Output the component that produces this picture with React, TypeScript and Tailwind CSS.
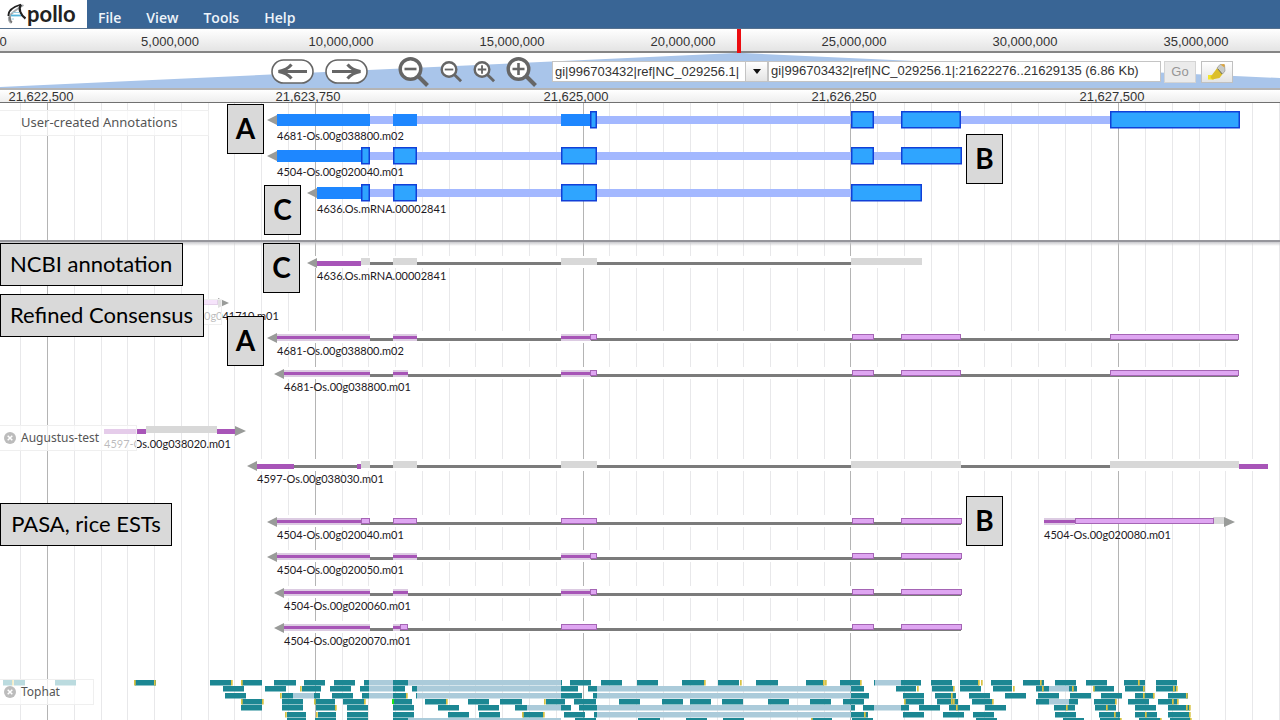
import React from "react";

type Kind = "utr" | "cds" | "gray" | "thick";
type Part = [number, number, Kind];

interface Transcript {
  name: string;
  y: number;
  start: number;
  end: number;
  dir: "left" | "right";
  parts: Part[];
  labelX: number;
  bare?: boolean;
}

const MINOR = 26.78;
const ORIGIN = 47.5;

const overviewTicks: [number, string][] = [
  [3, "0"],
  [170, "5,000,000"],
  [341, "10,000,000"],
  [512, "15,000,000"],
  [683, "20,000,000"],
  [854, "25,000,000"],
  [1025, "30,000,000"],
  [1196, "35,000,000"],
];

const detailTicks: [number, string][] = [
  [41, "21,622,500"],
  [308, "21,623,750"],
  [576, "21,625,000"],
  [844, "21,626,250"],
  [1112, "21,627,500"],
];

const userTranscripts: Transcript[] = [
  {
    name: "4681-Os.00g038800.m02", y: 17, start: 277, end: 1239, dir: "left", labelX: 277,
    parts: [[277, 370, "utr"], [393, 417, "utr"], [561, 591, "utr"], [590, 597, "cds"], [851, 874, "cds"], [901, 961, "cds"], [1110, 1240, "cds"]],
  },
  {
    name: "4504-Os.00g020040.m01", y: 53, start: 277, end: 962, dir: "left", labelX: 277,
    parts: [[277, 361, "utr"], [361, 370, "cds"], [393, 417, "cds"], [561, 597, "cds"], [851, 874, "cds"], [901, 962, "cds"]],
  },
  {
    name: "4636.Os.mRNA.00002841", y: 90, start: 317, end: 922, dir: "left", labelX: 317,
    parts: [[317, 361, "utr"], [361, 370, "cds"], [393, 417, "cds"], [561, 597, "cds"], [851, 922, "cds"]],
  },
];

const ncbi: Transcript[] = [
  {
    name: "4636.Os.mRNA.00002841", y: 20, start: 317, end: 922, dir: "left", labelX: 317,
    parts: [[317, 361, "thick"], [361, 370, "gray"], [393, 417, "gray"], [561, 597, "gray"], [851, 922, "gray"]],
  },
];

const refined: Transcript[] = [
  {
    name: "0g041710.m01", y: 2, start: 204, end: 218, dir: "right", labelX: 204, bare: true,
    parts: [[200, 218, "cds"]],
  },
  {
    name: "4681-Os.00g038800.m02", y: 37, start: 277, end: 1239, dir: "left", labelX: 277,
    parts: [[277, 370, "utr"], [393, 417, "utr"], [561, 591, "utr"], [590, 597, "cds"], [852, 874, "cds"], [901, 961, "cds"], [1110, 1239, "cds"]],
  },
  {
    name: "4681-Os.00g038800.m01", y: 73, start: 284, end: 1239, dir: "left", labelX: 284,
    parts: [[284, 370, "utr"], [393, 408, "utr"], [561, 591, "utr"], [590, 597, "cds"], [852, 874, "cds"], [901, 961, "cds"], [1110, 1239, "cds"]],
  },
];

const augustus: Transcript[] = [
  {
    name: "4597-Os.00g038020.m01", y: 5, start: 104, end: 235, dir: "right", labelX: 104, bare: true,
    parts: [[104, 146, "thick"], [146, 217, "gray"], [217, 235, "thick"]],
  },
  {
    name: "4597-Os.00g038030.m01", y: 40, start: 257, end: 1268, dir: "left", labelX: 257,
    parts: [[257, 294, "thick"], [357, 361, "thick"], [361, 370, "gray"], [393, 417, "gray"], [561, 597, "gray"], [851, 961, "gray"], [1110, 1239, "gray"], [1239, 1268, "thick"]],
  },
];

const pasa: Transcript[] = [
  {
    name: "4504-Os.00g020040.m01", y: 6, start: 277, end: 962, dir: "left", labelX: 277,
    parts: [[277, 361, "utr"], [361, 370, "cds"], [393, 417, "cds"], [561, 597, "cds"], [852, 874, "cds"], [901, 962, "cds"]],
  },
  {
    name: "4504-Os.00g020080.m01", y: 6, start: 1044, end: 1224, dir: "right", labelX: 1044, bare: true,
    parts: [[1044, 1075, "utr"], [1213, 1224, "gray"], [1075, 1214, "cds"]],
  },
  {
    name: "4504-Os.00g020050.m01", y: 41, start: 277, end: 962, dir: "left", labelX: 277,
    parts: [[277, 370, "utr"], [393, 417, "utr"], [561, 591, "utr"], [590, 597, "cds"], [852, 874, "cds"], [901, 962, "cds"]],
  },
  {
    name: "4504-Os.00g020060.m01", y: 77, start: 284, end: 962, dir: "left", labelX: 284,
    parts: [[284, 370, "utr"], [393, 408, "utr"], [561, 591, "utr"], [590, 597, "cds"], [852, 874, "cds"], [901, 962, "cds"]],
  },
  {
    name: "4504-Os.00g020070.m01", y: 112, start: 284, end: 962, dir: "left", labelX: 284,
    parts: [[284, 370, "utr"], [393, 400, "utr"], [400, 408, "cds"], [561, 597, "cds"], [852, 874, "cds"], [901, 962, "cds"]],
  },
];

interface ReadRow {
  y: number;
  reads: [number, number][];
  gaps: [number, number][];
  marks: number[];
}

const readRows: ReadRow[] = [
  {
    y: 1,
    reads: [[3, 12], [14, 25], [55, 76], [135, 156], [210, 231], [242, 262], [274, 296], [304, 325], [334, 355], [364, 369], [393, 408], [561, 562], [570, 591], [601, 622], [637, 658], [682, 704], [718, 739], [756, 778], [806, 824], [840, 860], [874, 875], [901, 921], [931, 952], [960, 979], [991, 1012], [1023, 1044], [1055, 1076], [1086, 1107], [1124, 1145], [1156, 1177]],
    gaps: [[369, 393], [408, 561], [875, 901]],
    marks: [12, 134, 154, 231, 241, 704, 740, 823, 825, 860, 978, 981, 1040, 1138],
  },
  {
    y: 7,
    reads: [[223, 244], [265, 286], [302, 321], [330, 351], [360, 369], [393, 405], [412, 417], [561, 578], [588, 597], [851, 864], [896, 916], [932, 953], [960, 981], [993, 1012], [1036, 1049], [1069, 1077], [1094, 1114], [1125, 1145], [1156, 1176]],
    gaps: [[369, 393], [417, 561], [597, 851], [1049, 1069]],
    marks: [300, 917, 953, 1013, 1042, 1072, 1093, 1143, 1173, 1176],
  },
  {
    y: 14,
    reads: [[225, 246], [282, 293], [314, 320], [332, 353], [362, 369], [393, 406], [416, 417], [561, 582], [593, 597], [851, 869], [903, 924], [935, 956], [969, 990], [1005, 1026], [1038, 1059], [1070, 1091], [1101, 1122], [1135, 1154], [1168, 1188]],
    gaps: [[293, 314], [369, 393], [417, 561], [597, 851]],
    marks: [280, 406, 951, 1143, 1153, 1186],
  },
  {
    y: 20,
    reads: [[242, 262], [282, 303], [315, 335], [343, 364], [393, 412], [425, 446], [468, 489], [500, 522], [546, 565], [574, 596], [619, 640], [662, 683], [690, 711], [722, 743], [768, 789], [810, 831], [843, 864], [905, 924], [937, 958], [972, 992], [1036, 1049], [1069, 1078], [1094, 1115], [1128, 1149], [1158, 1177]],
    gaps: [[1049, 1069]],
    marks: [241, 262, 314, 364, 446, 544, 904, 951, 953, 992, 1115, 1172, 1177],
  },
  {
    y: 26,
    reads: [[241, 262], [282, 303], [316, 336], [347, 368], [393, 414], [438, 459], [478, 499], [515, 527], [561, 571], [579, 597], [851, 855], [863, 874], [901, 909], [919, 940], [949, 970], [985, 1006], [1054, 1075], [1095, 1116], [1135, 1156], [1168, 1190]],
    gaps: [[527, 561], [597, 851], [874, 901]],
    marks: [335, 956, 1066, 1106, 1186, 1189],
  },
  {
    y: 33,
    reads: [[287, 306], [318, 336], [347, 368], [393, 414], [448, 469], [479, 500], [523, 543], [564, 585], [594, 597], [851, 868], [903, 924], [943, 964], [973, 994], [1055, 1076], [1099, 1120], [1135, 1157], [1168, 1190]],
    gaps: [[597, 851]],
    marks: [285, 316, 522, 543, 864, 1114, 1145, 1189],
  },
  {
    y: 39,
    reads: [[287, 306], [315, 336], [347, 368], [393, 408], [575, 596], [638, 660], [686, 707], [723, 744], [812, 832], [852, 873], [976, 997], [1063, 1084], [1100, 1120], [1139, 1160], [1170, 1191]],
    gaps: [[408, 561]],
    marks: [811, 1120, 1160, 1190],
  },
];

function AxisTick({ x, text }: { x: number; text: string }) {
  return (
    <span className="absolute -translate-x-1/2" style={{ left: x }}>
      {text}
    </span>
  );
}

function GridLines() {
  const lines = Array.from({ length: 95 }, (_, i) => i - 1);
  return (
    <svg className="absolute inset-0 h-full w-full" aria-hidden="true">
      {lines.map((i) => {
        const major = i % 10 === 0;
        return (
          <rect
            key={i}
            x={Math.round(ORIGIN + i * MINOR - 0.5)}
            y="0"
            width={1}
            height="100%"
            fill={major ? "#b4b4b4" : "#e8e8ea"}
          />
        );
      })}
    </svg>
  );
}

function Arrow({ x, y, dir }: { x: number; y: number; dir: "left" | "right" }) {
  const tip = dir === "left" ? x - 10 : x + 11;
  return <polygon points={`${x},${y - 5} ${x},${y + 5} ${tip},${y}`} fill="#999b99" />;
}

function UserGlyph({ t }: { t: Transcript }) {
  return (
    <g>
      <rect x={t.start} y={t.y - 4} width={t.end - t.start} height={8} fill="#a3b8ff" />
      {t.parts.map(([a, b, kind]) =>
        kind === "cds" ? (
          <rect key={a} x={a + 0.75} y={t.y - 8.25} width={b - a - 1.5} height={16} fill="#2fa5ff" stroke="#1140d8" strokeWidth={1.5} />
        ) : (
          <rect key={a} x={a} y={t.y - 6} width={b - a} height={12} fill="#1e87ff" />
        ),
      )}
      <Arrow x={t.start} y={t.y} dir={t.dir} />
    </g>
  );
}

function EvidenceGlyph({ t }: { t: Transcript }) {
  const noncoding = !t.parts.some((p) => p[2] === "cds");
  return (
    <g>
      {!t.bare && (
        <>
          <rect x={t.start - 10} y={t.y - 6} width={t.end - t.start + 10} height={12} fill="#fff" />
          <rect x={t.start} y={noncoding ? t.y : t.y + 1} width={t.end - t.start - 1} height={3} fill="#7b7b7b" />
        </>
      )}
      {t.parts.map(([a, b, kind]) => {
        if (kind === "cds")
          return <rect key={a} x={a + 0.5} y={t.y - 2.5} width={b - a - 1} height={5} fill="#dfa6f2" stroke="#a565b5" />;
        if (kind === "utr")
          return (
            <g key={a}>
              <rect x={a} y={t.y - 3} width={b - a} height={7} fill="#dccbe2" />
              <rect x={a} y={t.y - 1} width={b - a} height={3} fill="#a755b7" />
            </g>
          );
        if (kind === "gray") return <rect key={a} x={a} y={t.y - 4} width={b - a} height={7} fill="#d8d8d8" />;
        return <rect key={a} x={a} y={t.y - 1} width={b - a} height={5} fill="#a855b8" />;
      })}
      <Arrow x={t.dir === "left" ? t.start : t.end} y={t.y + 1} dir={t.dir} />
    </g>
  );
}

function Transcripts({ items, user = false }: { items: Transcript[]; user?: boolean }) {
  return (
    <>
      <svg className="absolute inset-0 h-full w-full overflow-visible" aria-hidden="true">
        {items.map((t) => (user ? <UserGlyph key={t.name} t={t} /> : <EvidenceGlyph key={t.name} t={t} />))}
      </svg>
      {items.map((t) => (
        <span
          key={t.name}
          className="absolute whitespace-nowrap font-['Lato',sans-serif] text-[11px] leading-4 text-[#1c1822]"
          style={{ left: t.labelX, top: t.y + (user ? 8 : 6) }}
        >
          {t.name}
        </span>
      ))}
    </>
  );
}

function TrackLabel({ text, size, closable = true }: { text: string; size: string; closable?: boolean }) {
  return (
    <div className={`absolute left-0 flex h-[26px] items-center border border-l-0 border-[#efefef] bg-white/70 text-[#555] ${size}`}>
      {closable ? (
        <button type="button" aria-label={`Close ${text}`} className="flex w-[21px] items-center pl-1">
          <svg viewBox="0 0 12 12" className="h-3 w-3">
            <circle cx="6" cy="6" r="6" fill="#bcbcbc" />
            <path d="M3.7 3.7 8.3 8.3M8.3 3.7 3.7 8.3" stroke="#fff" strokeWidth="1.5" />
          </svg>
        </button>
      ) : (
        <span className="w-[21px]" />
      )}
      <span className="whitespace-nowrap">{text}</span>
    </div>
  );
}

function Letter({ children, place }: { children: string; place: string }) {
  return (
    <div className={`absolute flex h-[50px] w-[37px] items-center justify-center border border-black bg-[#d9d9d9] pb-0.5 font-['Lato',sans-serif] text-[28px] font-bold leading-8 text-black ${place}`}>
      {children}
    </div>
  );
}

function Caption({ children, place }: { children: string; place: string }) {
  return (
    <div className={`absolute left-0 flex h-[43px] items-center whitespace-nowrap border border-black bg-[#d9d9d9] pb-0.5 pl-[9px] font-['Lato',sans-serif] text-[22px] leading-6 text-black ${place}`}>
      {children}
    </div>
  );
}

function PanButton({ dir }: { dir: "left" | "right" }) {
  return (
    <button type="button" aria-label={`Pan ${dir}`}>
      <svg viewBox="0 0 43 25" className={dir === "right" ? "h-[25px] w-[43px] rotate-180" : "h-[25px] w-[43px]"}>
        <rect x="1" y="1" width="41" height="23" rx="11.5" fill="#fff" stroke="#666" strokeWidth="1.6" />
        <path d="M36 12.5H9" stroke="#666" strokeWidth="3" />
        <path d="M20.500 5.500Q16 11 7.500 12.500 16 14 20.500 19.500" fill="none" stroke="#666" strokeWidth="3" />
      </svg>
    </button>
  );
}

function ZoomButton({ plus, size, name }: { plus?: boolean; size: string; name: string }) {
  return (
    <button type="button" aria-label={name}>
      <svg viewBox="0 0 32 31" className={size}>
        <path d="M19.5 18.5 29.5 28.5" stroke="#666" strokeWidth="4" />
        <circle cx="12.5" cy="12" r="10.3" fill="#fff" stroke="#666" strokeWidth="3.4" />
        <path d={plus ? "M6.5 12h12M12.5 6v12" : "M6.5 12h12"} stroke="#666" strokeWidth="2.6" />
      </svg>
    </button>
  );
}

function Logo() {
  return (
    <a href="#" aria-label="Apollo" className="flex h-full w-[87px] shrink-0 items-center bg-white pl-[7px]">
      <svg viewBox="0 0 20 22" className="h-[22px] w-5 shrink-0">
        <path d="M4 20C0 16 2 12.5 7 8.5 11 5.5 14 3.5 16.5 2" fill="none" stroke="#a9adb0" strokeWidth="2" />
        <path d="M1.5 13C1 8.5 5.5 4 14 1.5" fill="none" stroke="#222" strokeWidth="1.8" />
        <path d="M14 1.5C11 6 13.5 12 18.5 15.5" fill="none" stroke="#222" strokeWidth="2.2" />
        <path d="M2.5 13.5C3.5 15 2 18 5 19.5" fill="none" stroke="#777" strokeWidth="2" />
        <path d="M4 12.5H14" stroke="#55b5dc" strokeWidth="1.8" />
        <path d="M5.5 9.5H12.5M4.5 16H7" stroke="#9bcde0" strokeWidth="1" />
      </svg>
      <span className="font-['Lato',sans-serif] text-[22px] font-bold leading-6 text-[#222]">pollo</span>
    </a>
  );
}

export default function App() {
  return (
    <div className="flex h-screen flex-col overflow-hidden bg-white font-['Noto_Sans',sans-serif]">
      <header className="flex h-[29px] shrink-0 items-stretch border-b border-[#56718f] bg-[#396595]">
        <Logo />
        <nav className="flex items-end gap-[25px] pl-[11px] font-['Open_Sans',sans-serif] text-sm font-semibold leading-5 text-[#eef4fa]">
          <button type="button">File</button>
          <button type="button">View</button>
          <button type="button">Tools</button>
          <button type="button">Help</button>
        </nav>
      </header>

      <div className="relative h-6 shrink-0 border-b-2 border-[#858585] bg-linear-to-b from-white to-[#e4e4e4] pt-[5px] font-['Liberation_Sans',sans-serif] text-[13px] leading-4 text-[#333]">
        {overviewTicks.map(([x, text]) => (
          <AxisTick key={text} x={x} text={text} />
        ))}
        <div className="absolute top-0 left-[737px] z-10 h-6 w-1 bg-[#ec0c10]" />
      </div>

      <div className="relative h-[35px] shrink-0">
        <svg className="absolute inset-0 h-full w-full" viewBox="0 0 1280 35" preserveAspectRatio="none" aria-hidden="true">
          <polygon points="0,34 736,0 743,0 1280,25 1280,35 0,35" fill="#a9c5ea" />
        </svg>
        <div className="relative flex h-full items-center pb-px pl-[271px] font-['Liberation_Sans',sans-serif] text-[13px] text-[#333]">
          <div className="flex items-center gap-[11px] pt-[3px]">
            <PanButton dir="left" />
            <PanButton dir="right" />
          </div>
          <div className="flex items-center gap-[10px] pt-1 pl-[30px]">
            <ZoomButton size="h-[31px] w-8" name="Zoom out a lot" />
            <ZoomButton size="h-[22px] w-[23px]" name="Zoom out" />
            <ZoomButton plus size="h-[22px] w-[23px]" name="Zoom in" />
            <ZoomButton plus size="h-[31px] w-8" name="Zoom in a lot" />
          </div>
          <div className="flex items-center pt-[3px] pl-[14px]">
            <input
              aria-label="Reference sequence"
              defaultValue="gi|996703432|ref|NC_029256.1|"
              className="h-[21px] w-[194px] border border-[#c4c4c4] bg-white pl-[2px] outline-none"
            />
            <button type="button" aria-label="Show sequences" className="flex h-[21px] w-[22px] items-center justify-center border-y border-r border-[#c4c4c4] bg-linear-to-b from-white to-[#e4e4e4]">
              <svg viewBox="0 0 8 5" className="h-[5px] w-2">
                <path d="M0 0h8L4 5z" fill="#111" />
              </svg>
            </button>
            <input
              aria-label="Location"
              defaultValue="gi|996703432|ref|NC_029256.1|:21622276..21629135 (6.86 Kb)"
              className="h-[21px] w-[393px] border border-[#c4c4c4] bg-white pb-[3px] pl-[2px] outline-none"
            />
            <button type="button" className="ml-[3px] h-[22px] w-8 border border-[#d4d4d4] bg-[#ebebeb] text-[#969696]">
              Go
            </button>
            <button type="button" aria-label="Highlight" className="ml-[5px] flex h-[22px] w-8 items-center justify-center border border-[#c0c0c0] bg-linear-to-b from-white to-[#e4e4e4]">
              <svg viewBox="0 0 18 18" className="h-[18px] w-[18px]">
                <path d="M0 12h6v4.500H0z" fill="#f3e62c" />
                <path d="M9.500 4.500 15 10.500 11.500 15 4 16.500 2.500 14z" fill="#dcbf2b" />
                <path d="M9 5 12 1.500 16.500 2 17 8 14.500 11z" fill="#c9cbc8" stroke="#9a9a90" strokeWidth=".7" />
                <path d="M12.500 1.500 16.500 1 16.500 4.500z" fill="#dfa437" />
                <path d="M10 6 14 11" stroke="#7c7a61" strokeWidth="1" />
              </svg>
            </button>
          </div>
        </div>
      </div>

      <div className="relative h-[15px] shrink-0 border-t-2 border-b border-t-[#b4b4b4] border-b-[#707070] bg-linear-to-b from-white to-[#eee] font-['Liberation_Sans',sans-serif] text-[13px] leading-[14px] text-[#333]">
        {detailTicks.map(([x, text]) => (
          <AxisTick key={text} x={x} text={text} />
        ))}
      </div>

      <main className="relative min-h-0 flex-1 overflow-hidden">
        <GridLines />

        <section className="relative h-[139px]">
          <Transcripts items={userTranscripts} user />
          <TrackLabel text="User-created Annotations" size="top-[7px] w-[209px] text-[13px]" closable={false} />
          <Letter place="left-[227px] top-px">A</Letter>
          <Letter place="left-[966px] top-[31px]">B</Letter>
          <Letter place="left-[264px] top-[82px]">C</Letter>
          <div className="absolute inset-x-0 bottom-[-4px] h-1.5 border-t-2 border-[#96969c] bg-linear-to-b from-[#c8c8cc] to-transparent" />
        </section>

        <section className="relative h-[58px]">
          <Transcripts items={ncbi} />
          <Caption place="top-px w-[183px]">NCBI annotation</Caption>
          <Letter place="left-[263px] top-px">C</Letter>
        </section>

        <section className="relative h-[125px]">
          <Transcripts items={refined} />
          <TrackLabel text="" size="top-[-1px] w-[222px] text-xs" closable={false} />
          <Caption place="top-[-6px] w-[204px]">Refined Consensus</Caption>
          <Letter place="left-[227px] top-[16px]">A</Letter>
        </section>

        <section className="relative h-[90px]">
          <Transcripts items={augustus} />
          <TrackLabel text="Augustus-test" size="top-0 w-[137px] text-xs" />
        </section>

        <section className="relative h-[164px]">
          <Transcripts items={pasa} />
          <Caption place="top-[-12px] w-[172px] justify-center pr-[9px]">PASA, rice ESTs</Caption>
          <Letter place="left-[966px] top-[-19px]">B</Letter>
        </section>

        <section className="relative h-[41px]">
          <svg className="absolute inset-0 h-full w-full overflow-visible" aria-hidden="true">
            {readRows.map((row) => (
              <g key={row.y}>
                {row.gaps.map(([a, b]) => (
                  <rect key={a} x={a} y={row.y} width={b - a} height={5.5} fill="#abcbda" />
                ))}
                {row.reads.map(([a, b]) => (
                  <rect key={a} x={a} y={row.y} width={b - a} height={5.5} fill="#1c8793" />
                ))}
                {row.marks.map((x) => (
                  <rect key={x} x={x} y={row.y} width={1.7} height={5.5} fill="#d8c242" />
                ))}
              </g>
            ))}
            <rect x={392} y={20} width={2} height={5} fill="#19e619" />
          </svg>
          <TrackLabel text="Tophat" size="top-0 w-[94px] text-xs" />
        </section>
      </main>
    </div>
  );
}
